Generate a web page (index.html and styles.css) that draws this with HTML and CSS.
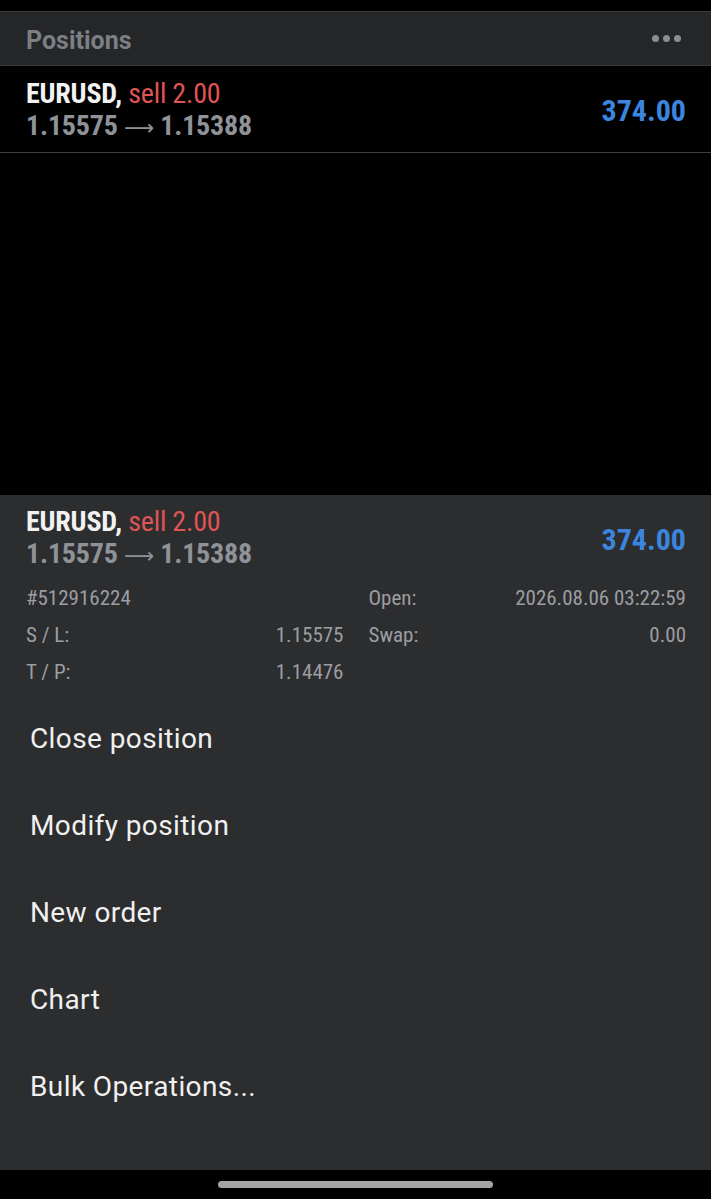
FILE: index.html
```html
<!DOCTYPE html>
<html lang="en">
<head>
  <meta charset="UTF-8" />
  <meta name="viewport" content="width=device-width, initial-scale=1.0">
  <title>Positions</title>
  <link rel="stylesheet" href="styles.css">
</head>
<body>

  <div class="status-bar"></div>

  <!-- 상단 헤더 -->
  <div class="header">
    <span class="header-title">Positions</span>
    <span class="more-dots"><i></i><i></i><i></i></span>
  </div>

  <!-- 포지션 목록 -->
  <div class="position-row">
    <div class="position-info">
      <div class="symbol-line"><b>EURUSD,</b> <span class="sell">sell 2.00</span></div>
      <div class="price-line">1.15575 <span class="arrow">&#10230;</span> 1.15388</div>
    </div>
    <div class="profit">374.00</div>
  </div>

  <div class="list-empty"></div>

  <!-- 하단 시트 -->
  <div class="sheet">
    <div class="position-row sheet-row">
      <div class="position-info">
        <div class="symbol-line"><b>EURUSD,</b> <span class="sell">sell 2.00</span></div>
        <div class="price-line">1.15575 <span class="arrow">&#10230;</span> 1.15388</div>
      </div>
      <div class="profit">374.00</div>
    </div>

    <div class="details">
      <div class="detail"><span>#512916224</span><span></span></div>
      <div class="detail"><span>Open:</span><span>2026.08.06 03:22:59</span></div>
      <div class="detail"><span>S / L:</span><span>1.15575</span></div>
      <div class="detail"><span>Swap:</span><span>0.00</span></div>
      <div class="detail"><span>T / P:</span><span>1.14476</span></div>
      <div class="detail"></div>
    </div>

    <ul class="menu">
      <li>Close position</li>
      <li>Modify position</li>
      <li>New order</li>
      <li>Chart</li>
      <li>Bulk Operations...</li>
    </ul>
  </div>

  <div class="home-bar"><div class="home-indicator"></div></div>

</body>
</html>
```

FILE: styles.css
```css
* {
  box-sizing: border-box;
}

body {
  margin: 0;
  height: 1199px;
  background-color: #000;
  font-family: Roboto, "Noto Sans", sans-serif;
  display: flex;
  flex-direction: column;
  overflow: hidden;
}

.status-bar {
  height: 11px;
  flex-shrink: 0;
}

.header {
  height: 55px;
  flex-shrink: 0;
  display: flex;
  align-items: center;
  justify-content: space-between;
  padding: 3px 26px 0;
  background-color: #252628;
  border-top: 1px solid #3a3b3d;
  border-bottom: 1px solid #3a3b3d;
}

.header-title {
  font-size: 25px;
  font-weight: bold;
  color: #7c7f84;
}

.more-dots {
  display: flex;
  gap: 4px;
  margin-right: 4px;
  margin-top: -4px;
}

.more-dots i {
  width: 7px;
  height: 7px;
  border-radius: 50%;
  background-color: #8a8c90;
}

.position-row {
  height: 87px;
  flex-shrink: 0;
  display: flex;
  align-items: center;
  justify-content: space-between;
  padding: 3px 25px 0 26px;
  border-bottom: 1px solid #3d3e40;
  font-family: "Roboto Condensed", "Liberation Sans Narrow", Roboto, sans-serif;
}

.symbol-line,
.price-line {
  font-size: 28px;
  line-height: 32px;
  letter-spacing: -0.2px;
}

.symbol-line b {
  color: #f2f2f2;
}

.sell {
  color: #e05454;
}

.price-line {
  font-weight: bold;
  color: #8f9297;
}

.arrow {
  font-family: "DejaVu Sans", sans-serif;
  font-weight: normal;
  font-size: 21px;
  letter-spacing: 0;
}

.profit {
  font-size: 30px;
  font-weight: bold;
  color: #3c85de;
}

.list-empty {
  flex: 1;
}

.sheet {
  height: 675px;
  flex-shrink: 0;
  background-color: #2c2d2f;
}

.sheet-row {
  height: auto;
  padding-top: 11px;
  border-bottom: none;
}

.details {
  display: grid;
  grid-template-columns: 1fr 1fr;
  column-gap: 25px;
  padding: 8px 25px 0 26px;
  font-family: "Roboto Condensed", "Liberation Sans Narrow", Roboto, sans-serif;
  font-size: 21px;
  color: #9c9ea2;
}

.detail {
  height: 37px;
  line-height: 37px;
  display: flex;
  justify-content: space-between;
}

.menu {
  list-style: none;
  margin: 4px 0 0;
  padding: 0;
}

.menu li {
  height: 87px;
  line-height: 87px;
  padding-left: 30px;
  font-size: 28px;
  letter-spacing: 0.4px;
  color: #f0f0f0;
}

.home-bar {
  height: 29px;
  flex-shrink: 0;
  display: flex;
  justify-content: center;
  padding-top: 11px;
}

.home-indicator {
  width: 275px;
  height: 7px;
  border-radius: 4px;
  background-color: #a3a3a3;
}
```
